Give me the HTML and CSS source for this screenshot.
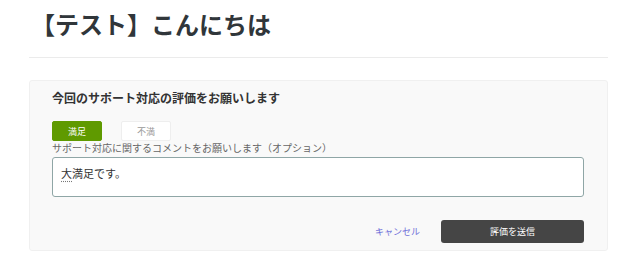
FILE: index.html
```html
<!DOCTYPE html>
<html lang="ja">
<head>
  <meta charset="UTF-8" />
  <meta name="viewport" content="width=device-width, initial-scale=1" />
  <title>【テスト】こんにちは</title>
  <link rel="stylesheet" href="styles.css">
</head>
<body>
  <div class="page">
    <h1 class="title">【テスト】こんにちは</h1>
    <hr class="divider" />

    <form class="rating-card">
      <h2 class="rating-title">今回のサポート対応の評価をお願いします</h2>
      <div class="choices">
        <button type="button" class="choice selected">満足</button>
        <button type="button" class="choice">不満</button>
      </div>
      <label class="comment-label" for="comment">サポート対応に関するコメントをお願いします（オプション）</label>
      <div class="comment" id="comment" contenteditable="true"><span class="ime">大</span>満足です。</div>
      <div class="actions">
        <a href="#" class="cancel">キャンセル</a>
        <button type="submit" class="submit">評価を送信</button>
      </div>
    </form>
  </div>
</body>
</html>
```

FILE: styles.css
```css
body {
  margin: 0;
  padding: 0;
  background: #fff;
  color: #333;
  font-family: "Noto Sans CJK JP", "Noto Sans", sans-serif;
}
.page {
  padding: 0 32px 0 29px;
}
.title {
  margin: 8px 0 0 2px;
  font-size: 24px;
  line-height: 32px;
  font-weight: bold;
  color: #30363a;
}
.divider {
  margin: 17px 0 0 0;
  border: none;
  border-top: 1px solid #ebebeb;
}
.rating-card {
  margin-top: 22px;
  padding: 9px 23px 7px 22px;
  background: #f9f9f9;
  border: 1px solid #f0f0f0;
  border-radius: 3px;
}
.rating-title {
  margin: 0;
  font-size: 12px;
  line-height: 16px;
  font-weight: bold;
  color: #333;
}
.choices {
  display: flex;
  gap: 19px;
  margin-top: 15px;
}
.choice {
  width: 50px;
  height: 20px;
  padding: 0;
  font-family: inherit;
  font-size: 9px;
  color: #999;
  background: #fff;
  border: 1px solid #eee;
  border-radius: 2px;
}
.choice.selected {
  background: #5f9a00;
  border-color: #5f9a00;
  color: #fff;
}
.comment-label {
  display: block;
  font-size: 10px;
  line-height: 13px;
  color: #666;
}
.comment {
  margin-top: 3px;
  height: 40px;
  box-sizing: border-box;
  padding: 7px 8px;
  font-size: 11px;
  line-height: 16px;
  color: #333;
  background: #fff;
  border: 1px solid #8fa6a6;
  border-radius: 3px;
  outline: none;
}
.ime {
  text-decoration: underline dotted #777;
  text-underline-offset: 3px;
}
.actions {
  display: flex;
  justify-content: flex-end;
  align-items: center;
  margin-top: 23px;
}
.cancel {
  margin-right: 21px;
  font-size: 9px;
  color: #6e6ed8;
  text-decoration: none;
}
.submit {
  width: 143px;
  height: 23px;
  padding: 0;
  font-family: inherit;
  font-size: 9px;
  color: #fff;
  background: #454545;
  border: none;
  border-radius: 3px;
}
```
